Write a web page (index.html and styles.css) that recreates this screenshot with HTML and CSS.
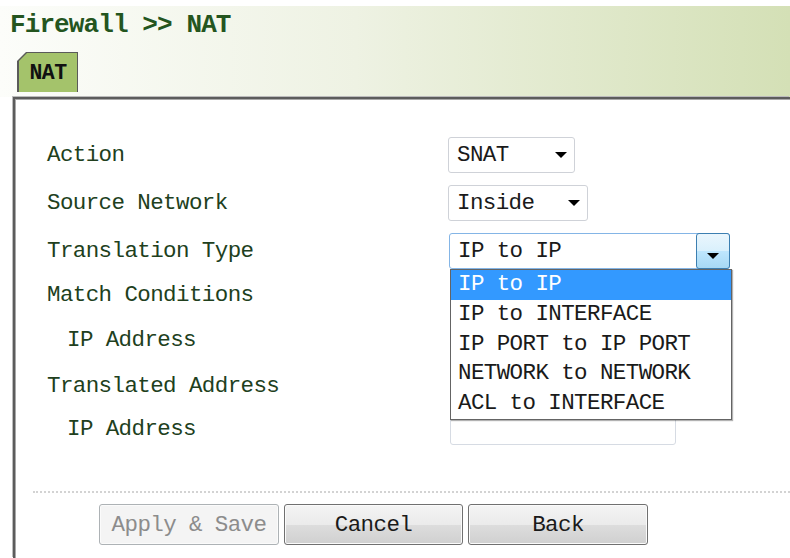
FILE: index.html
```html
<!DOCTYPE html>
<html>
<head>
<meta charset="utf-8">
<title>Firewall - NAT</title>
<link rel="stylesheet" href="styles.css">
</head>
<body>
<div class="page">
  <header class="head">
    <h1 class="crumb">Firewall &gt;&gt; NAT</h1>
    <div class="tab"><div class="tab-face">NAT</div></div>
  </header>

  <section class="panel">
    <div class="form">
      <span class="lbl">Action</span>
      <div class="combo combo-snat"><span class="val">SNAT</span><i class="caret"></i></div>

      <span class="lbl">Source Network</span>
      <div class="combo combo-inside"><span class="val">Inside</span><i class="caret"></i></div>

      <span class="lbl">Translation Type</span>
      <div class="combo combo-open">
        <span class="val">IP to IP</span>
        <span class="combo-btn"><i class="caret"></i></span>
        <ul class="menu">
          <li class="menu-item is-active">IP to IP</li>
          <li class="menu-item">IP to INTERFACE</li>
          <li class="menu-item">IP PORT to IP PORT</li>
          <li class="menu-item">NETWORK to NETWORK</li>
          <li class="menu-item">ACL to INTERFACE</li>
        </ul>
      </div>

      <span class="lbl">Match Conditions</span>
      <span class="empty"></span>

      <span class="lbl lbl-sub">IP Address</span>
      <div class="field"></div>

      <span class="lbl">Translated Address</span>
      <span class="empty"></span>

      <span class="lbl lbl-sub">IP Address</span>
      <div class="field"></div>
    </div>

    <div class="sep"></div>

    <div class="actions">
      <button class="btn btn-wide" disabled>Apply &amp; Save</button>
      <button class="btn">Cancel</button>
      <button class="btn btn-wide">Back</button>
    </div>
  </section>
</div>
</body>
</html>
```

FILE: styles.css
```css
* {
  box-sizing: border-box;
}

html,
body {
  margin: 0;
  padding: 0;
}

body {
  width: 790px;
  height: 558px;
  overflow: hidden;
  background: #ffffff;
  font-family: "Liberation Mono", "DejaVu Sans Mono", monospace;
  font-size: 22.5px;
  letter-spacing: -0.6px;
  color: #213f1d;
}

.page {
  padding-top: 6px;
}

/* title strip with the breadcrumb and the tab */
.head {
  height: 91px;
  padding: 4.5px 0 5px 10px;
  background: linear-gradient(to right, #fcfdfa 0%, #eef2e3 45%, #d4e0b6 100%);
}

.crumb {
  margin: 0;
  font-size: 26px;
  line-height: 28px;
  letter-spacing: -0.9px;
  font-weight: bold;
  color: #24551f;
}

.tab {
  width: 61px;
  height: 40px;
  margin: 13.5px 0 0 7px;
  padding: 1px 1px 0 2px;
  background: #5a5a5a;
  clip-path: polygon(9px 0, 100% 0, 100% 100%, 0 100%, 0 9px);
}

.tab-face {
  height: 100%;
  display: flex;
  align-items: center;
  justify-content: center;
  background: #a4c36b;
  clip-path: polygon(8px 0, 100% 0, 100% 100%, 0 100%, 0 8px);
  font-size: 21.5px;
  font-weight: bold;
  color: #111111;
}

/* main framed panel */
.panel {
  height: 461px;
  margin-left: 13px;
  padding: 32px 0 0 18px;
  border-top: 2px solid #5c5c5c;
  border-left: 2px solid #5c5c5c;
  box-shadow: -1px -1px 0 #bcbcbc, inset 1px 1px 0 #a9a9a9;
}

.form {
  margin-left: 14px;
  display: grid;
  grid-template-columns: 401px 1fr;
  grid-template-rows: 48px 48px 48px 40px 50px 42px 44px;
  align-items: center;
}

.lbl {
  white-space: nowrap;
}

.lbl-sub {
  padding-left: 20px;
}

/* drop-down boxes */
.combo {
  position: relative;
  height: 36px;
  display: flex;
  align-items: center;
  justify-content: space-between;
  padding: 0 7px 0 8px;
  background: #ffffff;
  border: 1px solid #cfd2d8;
  border-radius: 3px;
  color: #1a1a1a;
  white-space: nowrap;
}

.combo-snat {
  width: 127px;
}

.combo-inside {
  width: 140px;
}

.caret {
  display: block;
  width: 0;
  height: 0;
  border-top: 6px solid #000000;
  border-left: 6.5px solid transparent;
  border-right: 6.5px solid transparent;
}

.combo-open {
  width: 281px;
  margin-left: 1px;
  padding-right: 0;
  border-color: #84b5e6;
  z-index: 2;
}

.combo-btn {
  align-self: stretch;
  width: 34px;
  margin: -1px -1px -1px 0;
  display: flex;
  align-items: center;
  justify-content: center;
  padding-top: 9px;
  border: 1px solid #3c7fb1;
  border-radius: 3px;
  background: linear-gradient(#eaf6fd 0%, #d9f0fc 50%, #bee6fd 51%, #a7d9f5 100%);
}

.menu {
  position: absolute;
  top: calc(100% + 1px);
  left: 0;
  width: 282px;
  margin: 0;
  padding: 0;
  list-style: none;
  background: #ffffff;
  border: 1px solid #646464;
  box-shadow: 1px 1px 1px rgba(0, 0, 0, 0.3);
}

.menu-item {
  height: 29.8px;
  line-height: 29.8px;
  padding-left: 7px;
  color: #1a1a1a;
}

.menu-item.is-active {
  background: #3399ff;
  color: #ffffff;
}

/* text fields */
.field {
  width: 226px;
  height: 31px;
  margin-left: 2px;
  border: 1px solid #d6dbe3;
  border-radius: 3px;
  background: #ffffff;
}

.sep {
  margin-top: 40px;
  border-top: 2px dotted #d3d3d3;
}

.actions {
  margin: 11px 0 0 66px;
  display: flex;
  gap: 5px;
}

.btn {
  width: 179px;
  height: 41px;
  padding: 0;
  font: inherit;
  letter-spacing: inherit;
  color: #1a1a1a;
  border: 1px solid #707070;
  border-radius: 3px;
  background: linear-gradient(#f4f4f4 0%, #ebebeb 50%, #dddddd 51%, #d0d0d0 100%);
  box-shadow: inset 0 0 0 1px #fbfbfb;
}

.btn-wide {
  width: 180px;
}

.btn:disabled {
  color: #8c8c8c;
  border-color: #adb2b5;
  background: #f4f4f4;
}
```
